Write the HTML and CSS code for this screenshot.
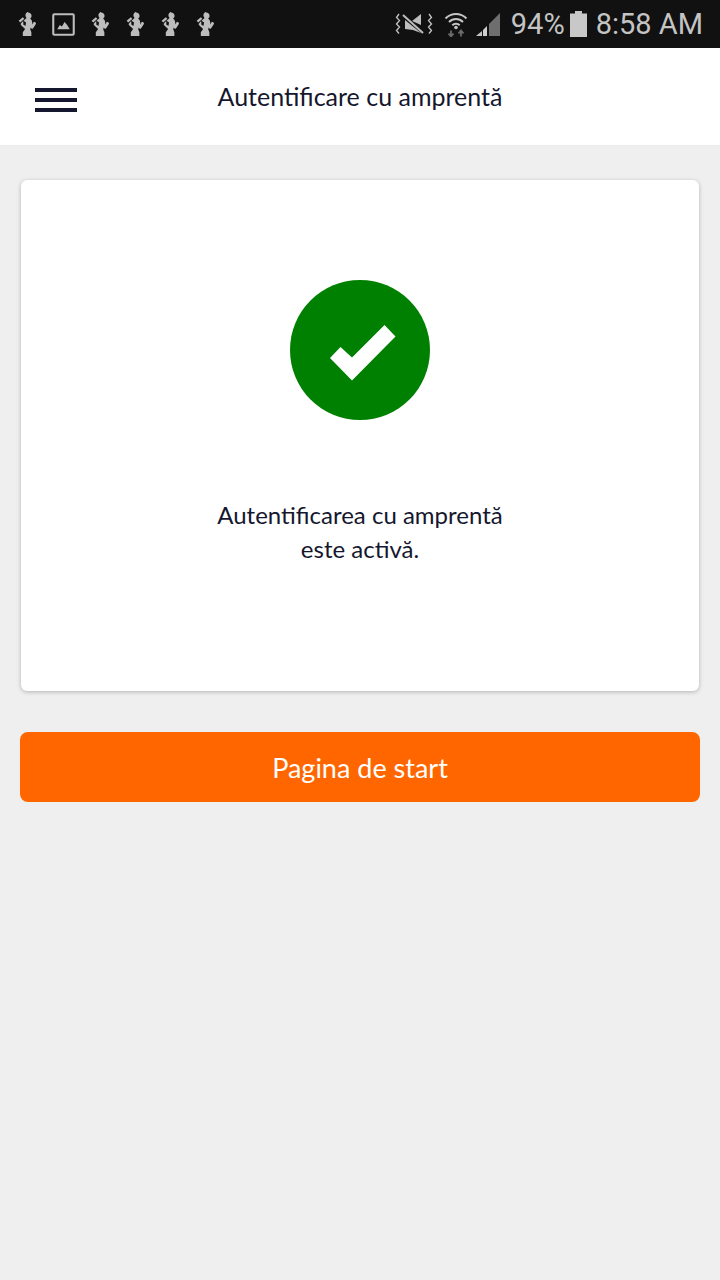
FILE: index.html
```html
<!DOCTYPE html>
<html lang="ro">
<head>
<meta charset="utf-8">
<title>Autentificare cu amprentă</title>
<link rel="stylesheet" href="styles.css">
</head>
<body>
<svg class="defs" width="0" height="0" aria-hidden="true">
  <symbol id="person" viewBox="0 0 20 24">
    <path d="M10.5 0.5c2 0 3.4 1.4 3.4 3.2 0 1.2-.6 2.2-1.4 2.8 1 .4 1.6 1.2 1.8 2.4l.5 3 1.2-2.6 1.6.6.6 1.4-2.8 4.2c-.6.7-1.400.7-1.900.2l-.6-.8-.2 2.200 1 2v4H5.500v-3.600l2.200-3.200-3.800-3.600c-.6-.7-.6-1.400 0-2l1.900-2.100.3 2.500-.4.6 2.300 1.700.6-3.300-2.400-1.800 2.900-2.600c-.7-.6-1.100-1.500-1.100-2.600 0-1.800 1.600-3.200 2.500-3.200z"/>
    <path d="M1.500 8.500l4-3.500 1.500 1.400-4 3.600z"/>
  </symbol>
</svg>

<div class="statusbar">
  <div class="status-left">
    <svg class="ico-person"><use href="#person"/></svg>
    <svg class="ico-image" viewBox="0 0 22 22">
      <rect x="1.200" y="1.200" width="19.600" height="19.600" rx="1" fill="none" stroke="#bdbdbd" stroke-width="2"/>
      <path d="M5 15.500l2.500-4 2 1.500 2.500-4.500 2.500 3 2.500 4z" fill="#bdbdbd"/>
    </svg>
    <svg class="ico-person"><use href="#person"/></svg>
    <svg class="ico-person"><use href="#person"/></svg>
    <svg class="ico-person"><use href="#person"/></svg>
    <svg class="ico-person"><use href="#person"/></svg>
  </div>
  <div class="status-right">
    <svg class="ico-mute" viewBox="0 0 38 26">
      <path d="M4 3l-2.500 3.500 3 3-3 3.500 3 3-3 3.500 2.500 3M34 3l2.500 3.500-3 3 3 3.500-3 3 3 3.500-2.500 3" fill="none" stroke="#c4c4c4" stroke-width="1.300"/>
      <path d="M17 10L26 3v11zM10 9l16 13-8-3-8-1z" fill="#bdbdbd"/>
      <path d="M8 4l20 18" stroke="#bdbdbd" stroke-width="2"/>
    </svg>
    <svg class="ico-wifi" viewBox="0 0 24 26">
      <path d="M1.500 7.500C7.500 1.500 16.500 1.500 22.500 7.500M5 11c4-4 10-4 14 0M8.300 14.300c2-2 5.400-2 7.400 0" fill="none" stroke="#c4c4c4" stroke-width="2"/>
      <circle cx="12" cy="16.500" r="1.800" fill="#c4c4c4"/>
      <path d="M7 19.500v6M4.500 22.500l2.500 3 2.500-3M17 25.500v-6M14.500 22.500l2.500-3 2.500 3" fill="none" stroke="#6b6b6b" stroke-width="1.800"/>
    </svg>
    <svg class="ico-signal" viewBox="0 0 26 25">
      <path d="M1 24l6-5v5z" fill="#c4c4c4"/>
      <path d="M8 18l4-4v10H8z" fill="#d0d0d0"/>
      <path d="M14 12L25 1v23H14z" fill="#6e6e6e"/>
    </svg>
    <span class="status-text pct">94%</span>
    <svg class="ico-battery" viewBox="0 0 17 26">
      <path d="M5 0h7v2.500h5V26H0V2.500h5z" fill="#c8c8c8"/>
    </svg>
    <span class="status-text clock">8:58 AM</span>
  </div>
</div>

<header class="topbar">
  <div class="menu" aria-label="Meniu">
    <span class="menu-line"></span>
    <span class="menu-line"></span>
    <span class="menu-line"></span>
  </div>
  <h1 class="title">Autentificare cu amprentă</h1>
</header>

<main class="content">
  <section class="card">
    <svg class="success" viewBox="0 0 140 140">
      <circle cx="70" cy="70" r="70" fill="#008000"/>
      <path d="M40 78l10.500-11 11.500 10.500 32.500-32.500 11 11.500-43.500 44z" fill="#fff"/>
    </svg>
    <p class="message">Autentificarea cu amprentă<br>este activă.</p>
  </section>
  <button class="primary" type="button">Pagina de start</button>
</main>
</body>
</html>
```
FILE: styles.css
```css
* { box-sizing: border-box; }
html, body { margin: 0; padding: 0; }
body {
  width: 720px;
  height: 1280px;
  background: #efefef;
  font-family: Lato, "Noto Sans", sans-serif;
  color: #1a1a2e;
  overflow: hidden;
}
.defs { display: block; height: 0; }

.statusbar {
  height: 48px;
  background: #111;
  display: flex;
  align-items: center;
  justify-content: space-between;
  padding: 0 17px 0 17px;
}
.status-left { display: flex; align-items: center; gap: 14px; }
.ico-person { width: 21px; height: 25px; fill: #bdbdbd; }
.ico-image { width: 23px; height: 23px; margin: 0 1px 0 0; }
.status-right { display: flex; align-items: center; }
.ico-mute { width: 38px; height: 26px; margin-right: 11px; }
.ico-wifi { width: 24px; height: 26px; margin-right: 7px; }
.ico-signal { width: 26px; height: 25px; margin-right: 10px; }
.ico-battery { width: 17px; height: 26px; margin: 0 9px 0 5px; }
.status-text {
  font-family: Roboto, "Liberation Sans", sans-serif;
  font-size: 29px;
  line-height: 48px;
  color: #c4c4c4;
}

.topbar {
  height: 98px;
  background: #fff;
  display: flex;
  align-items: center;
  justify-content: center;
  position: relative;
  border-bottom: 1px solid #ebebeb;
}
.menu {
  position: absolute;
  left: 35px;
  top: 40px;
  width: 42px;
  display: flex;
  flex-direction: column;
  gap: 6px;
}
.menu-line { height: 4px; background: #15172e; display: block; }
.title {
  margin: 0 0 2px;
  font-size: 25px;
  font-weight: 400;
  color: #15172e;
}

.content {
  padding: 34px 20px 0;
  display: flex;
  flex-direction: column;
}
.card {
  height: 511px;
  margin: 0 1px;
  background: #fff;
  border-radius: 6px;
  box-shadow: 0 1px 4px rgba(0, 0, 0, 0.25);
  display: flex;
  flex-direction: column;
  align-items: center;
  padding-top: 100px;
}
.success { width: 140px; height: 140px; display: block; }
.message {
  margin: 78px 0 0;
  font-size: 24px;
  line-height: 34px;
  text-align: center;
  color: #15172e;
}
.primary {
  margin-top: 41px;
  height: 70px;
  border: 0;
  border-radius: 8px;
  background: #ff6600;
  color: #fff;
  font-family: inherit;
  font-size: 27px;
  padding: 0;
}
```
